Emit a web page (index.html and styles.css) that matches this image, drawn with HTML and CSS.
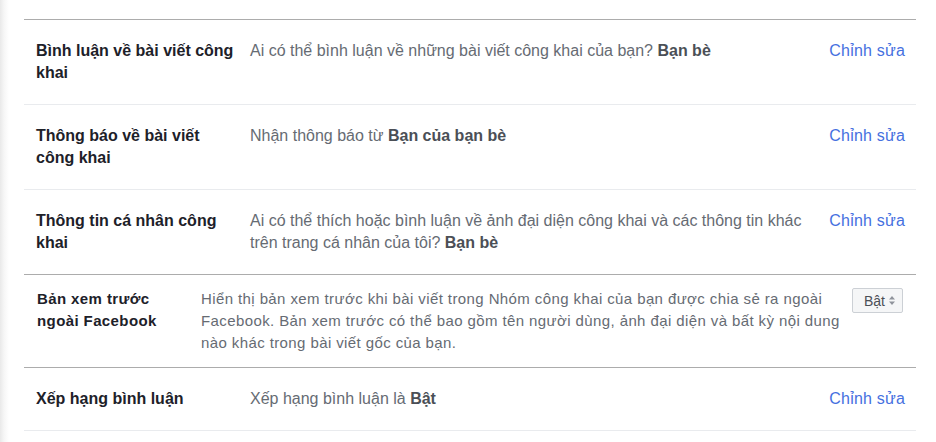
FILE: index.html
```html
<!DOCTYPE html>
<html lang="vi">
<head>
  <meta charset="UTF-8">
  <meta name="viewport" content="width=device-width, initial-scale=1.0">
  <title>Cài đặt nhóm</title>
  <link rel="stylesheet" href="styles.css">
</head>
<body>
  <div class="panel">
    <div class="settings">
      <div class="row">
        <div class="label">Bình luận về bài viết công khai</div>
        <div class="desc">Ai có thể bình luận về những bài viết công khai của bạn? <b>Bạn bè</b></div>
        <a class="edit" href="#">Chỉnh sửa</a>
      </div>
      <div class="row">
        <div class="label">Thông báo về bài viết công khai</div>
        <div class="desc">Nhận thông báo từ <b>Bạn của bạn bè</b></div>
        <a class="edit" href="#">Chỉnh sửa</a>
      </div>
      <div class="row">
        <div class="label">Thông tin cá nhân công khai</div>
        <div class="desc">Ai có thể thích hoặc bình luận về ảnh đại diện công khai và các thông tin khác trên trang cá nhân của tôi? <b>Bạn bè</b></div>
        <a class="edit" href="#">Chỉnh sửa</a>
      </div>
      <div class="row row-small">
        <div class="label">Bản xem trước ngoài Facebook</div>
        <div class="desc">Hiển thị bản xem trước khi bài viết trong Nhóm công khai của bạn được chia sẻ ra ngoài Facebook. Bản xem trước có thể bao gồm tên người dùng, ảnh đại diện và bất kỳ nội dung nào khác trong bài viết gốc của bạn.</div>
        <button class="select">Bật
          <svg width="6" height="9" viewBox="0 0 6 9"><path d="M3 0 6 3.5H0z M3 9 0 5.5h6z" fill="#90949c"/></svg>
        </button>
      </div>
      <div class="row">
        <div class="label">Xếp hạng bình luận</div>
        <div class="desc">Xếp hạng bình luận là <b>Bật</b></div>
        <a class="edit" href="#">Chỉnh sửa</a>
      </div>
    </div>
  </div>
</body>
</html>
```

FILE: styles.css
```css
body {
  margin: 0;
  font-family: "Liberation Sans", Arial, sans-serif;
  background: #fff;
  color: #1d2129;
}
.panel {
  min-height: 442px;
  box-sizing: border-box;
  padding: 19px 20px 0 24px;
  background: linear-gradient(to right, #e9e9e9, #f6f6f6 4px, #fff 9px);
}
.settings {
  border-top: 1px solid #acacac;
}
.row {
  display: flex;
  align-items: flex-start;
  padding: 20px 11px 20px 12px;
  border-bottom: 1px solid #e9ebee;
  font-size: 16px;
  line-height: 22px;
}
.label {
  width: 205px;
  margin-right: 9px;
  flex-shrink: 0;
  font-weight: bold;
  color: #1d2129;
}
.desc {
  flex: 1;
  max-width: 560px;
  color: #666b73;
}
.desc b {
  color: #4b4f56;
}
.edit {
  margin-left: auto;
  color: #4670e0;
  letter-spacing: 0.2px;
  text-decoration: none;
}
.row-small {
  padding: 13px 13px 13px 13px;
  font-size: 15px;
  border-top: 1px solid #acacac;
  border-bottom: 1px solid #acacac;
  margin-top: -1px;
}
.row-small .label {
  width: 140px;
  margin-right: 24px;
  letter-spacing: 0.4px;
}
.row-small .desc {
  max-width: 645px;
  line-height: 22px;
  letter-spacing: 0.4px;
}
.select {
  margin-left: auto;
  height: 25px;
  padding: 0 7px 0 11px;
  display: flex;
  align-items: center;
  gap: 4px;
  background: #f5f6f7;
  border: 1px solid #ccd0d5;
  border-radius: 2px;
  font-family: inherit;
  font-size: 14px;
  color: #4b4f56;
}
```
